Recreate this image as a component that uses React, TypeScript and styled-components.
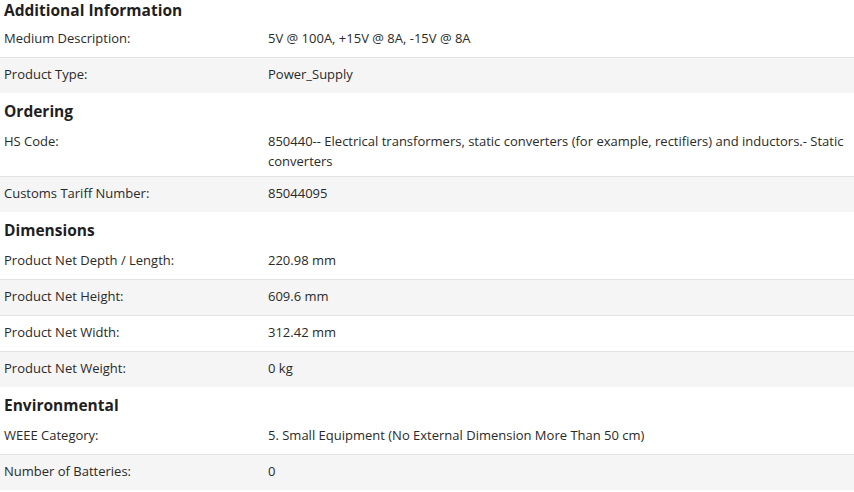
import React from "react";
import styled, { createGlobalStyle } from "styled-components";

const Global = createGlobalStyle`
  html, body { margin: 0; padding: 0; background: #ffffff; }
  body { font-family: "Open Sans", "Liberation Sans", sans-serif; color: #262626; }
  * { box-sizing: border-box; }
`;

const Page = styled.div`
  width: 854px;
  display: flex;
  flex-direction: column;
`;

const Section = styled.section`
  display: flex;
  flex-direction: column;
`;

const Heading = styled.h2<{ $first?: boolean }>`
  margin: 0;
  padding: ${(p) => (p.$first ? "1px 4px 2px" : "9px 4px 4px")};
  font-size: 15.5px;
  line-height: 18px;
  font-weight: 700;
  color: #1f1f1f;
`;

const Row = styled.div<{ $shaded?: boolean }>`
  display: grid;
  grid-template-columns: 264px 1fr;
  align-items: start;
  min-height: 36px;
  padding: 6px 4px 5px 4px;
  border-top: 1px solid #e3e3e3;
  background: ${(p) => (p.$shaded ? "#f5f5f5" : "#ffffff")};
  font-size: 13px;
  line-height: 20px;
  &:first-of-type {
    border-top-color: transparent;
  }
`;

const Label = styled.div`
  color: #2a2a2a;
`;

const Value = styled.div`
  color: #2a2a2a;
  padding-right: 2px;
`;

type Item = [string, string];
const sections: { title: string; items: Item[] }[] = [
  {
    title: "Additional Information",
    items: [
      ["Medium Description:", "5V @ 100A, +15V @ 8A, -15V @ 8A"],
      ["Product Type:", "Power_Supply"],
    ],
  },
  {
    title: "Ordering",
    items: [
      [
        "HS Code:",
        "850440-- Electrical transformers, static converters (for example, rectifiers) and inductors.- Static converters",
      ],
      ["Customs Tariff Number:", "85044095"],
    ],
  },
  {
    title: "Dimensions",
    items: [
      ["Product Net Depth / Length:", "220.98 mm"],
      ["Product Net Height:", "609.6 mm"],
      ["Product Net Width:", "312.42 mm"],
      ["Product Net Weight:", "0 kg"],
    ],
  },
  {
    title: "Environmental",
    items: [
      ["WEEE Category:", "5. Small Equipment (No External Dimension More Than 50 cm)"],
      ["Number of Batteries:", "0"],
    ],
  },
];

export default function App() {
  return (
    <>
      <Global />
      <Page>
        {sections.map((s, si) => (
          <Section key={s.title}>
            <Heading $first={si === 0}>{s.title}</Heading>
            {s.items.map(([l, v], i) => (
              <Row key={l} $shaded={i % 2 === 1}>
                <Label>{l}</Label>
                <Value>{v}</Value>
              </Row>
            ))}
          </Section>
        ))}
      </Page>
    </>
  );
}
